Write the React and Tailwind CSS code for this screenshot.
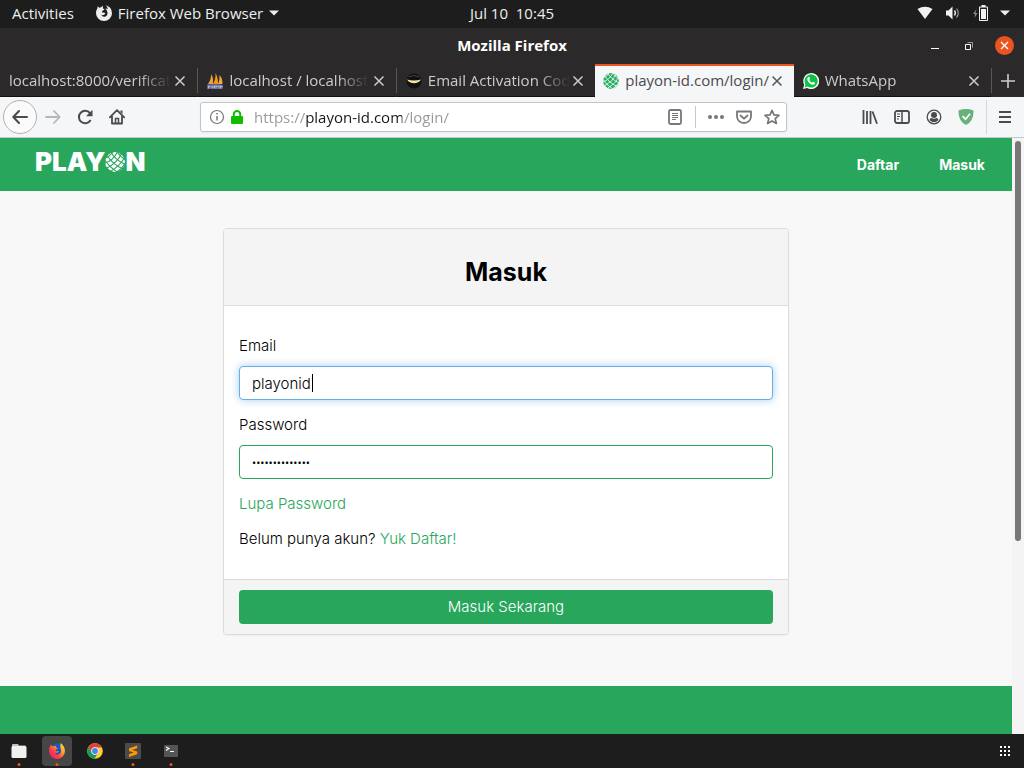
function MeshBall({ size = 16, ball, line }) {
  return (
    <svg width={size} height={size} viewBox="0 0 20 20" fill="none" className="shrink-0" aria-hidden="true">
      <circle cx="10" cy="10" r="9.9" fill={ball} />
      <g stroke={line} strokeWidth="1.100">
        <path d="M0 6Q5 5 8-1M0 11Q8 9 13-1M2 16Q12 11 17 1M6 19Q15 14 20 5M11 20.500Q17 17 20.500 11" />
        <path d="M12-1Q14 4 21 8M6 0Q10 8 20.500 12.500M2 3Q7 12 18 17M-1 7Q4 15 13 20.500M-1 13Q2 17 7 20.500" />
      </g>
    </svg>
  );
}

function SailsIcon() {
  return (
    <svg width="16" height="16" viewBox="0 0 16 16" className="shrink-0" aria-hidden="true">
      <path d="M1 11Q4 7 4.500 1Q6.500 5 6 11Z" fill="#f0a04b" />
      <path d="M6 11Q9 6 8.500 0Q11 4 11 11Z" fill="#f89c0e" />
      <path d="M11 11Q13 7 12.500 2Q15.500 5 15.500 11Z" fill="#f7a83c" />
      <path d="M0 11.500Q8 10 16 12V16H0Z" fill="#5a5f8f" />
      <path d="M1.500 15.500V13H3V14.500M5 15.500V12.500M5 14H7M7.500 12.500V15.500M9 15.500V12.500L10.500 14L12 12.500V15.500M13.500 15.500V13H15V14.500" fill="none" stroke="#d0d0e4" strokeWidth=".8" />
    </svg>
  );
}

function SmileIcon() {
  return (
    <svg width="16" height="16" viewBox="0 0 16 16" className="shrink-0" aria-hidden="true">
      <circle cx="8" cy="8" r="7.500" fill="#111" />
      <path d="M2.500 4Q8 1 13.500 4" stroke="#444" fill="none" />
      <path d="M1 6.500Q8 8.500 15 6.500Q12.500 10.300 8 10.300T1 6.500Z" fill="#f3e7a0" />
    </svg>
  );
}

function WhatsAppIcon() {
  return (
    <svg width="16" height="16" viewBox="0 0 16 16" className="shrink-0" aria-hidden="true">
      <path d="M0 16L1.200 11.800A8 8 0 1 1 4.300 15Z" fill="#fff" />
      <path d="M1.600 14.400L2.500 11.400A6.600 6.600 0 1 1 4.700 13.600Z" fill="#0dc143" />
      <path d="M5.200 4Q6.300 3.300 6.800 5L7 6L6.300 7Q7.300 9 9.300 9.700L10.200 8.800L12 9.700Q12.200 11.800 9.900 11.800Q5.500 11 4.300 6.800Q4 5 5.200 4Z" fill="#fff" />
    </svg>
  );
}

function FirefoxGlyph() {
  return (
    <svg width="16" height="16" viewBox="0 0 16 16" aria-hidden="true">
      <path d="M1.300 3.500L1.800 1.200L3.200 2.700Q4 2.300 5 2.300L7 .8L6.800 3.200L8.600 4.400L7 5.500Q5.500 6 6.300 7.800Q8 7 9.500 8.300Q8.500 9 8.300 9.800Q6.500 10.600 5.200 9.800Q6.200 12.300 9 11.700Q12.200 10.500 11.300 6.800Q10.800 5 9.300 3.500Q11 3.600 11.900 4.600Q11.800 2.200 9.800 .3Q15.800 2 16 8.200A8 7.800 0 0 1 0 8.200Q0 5.500 1.300 3.500Z" fill="currentColor" />
    </svg>
  );
}

function Cross({ className }) {
  return (
    <svg width="12" height="12" viewBox="0 0 12 12" className={className} aria-hidden="true">
      <path d="M1.500 1.500L10.500 10.500M10.500 1.500L1.500 10.500" stroke="currentColor" strokeWidth="1.500" fill="none" />
    </svg>
  );
}

function Triangle() {
  return (
    <svg width="10" height="6" viewBox="0 0 10 6" aria-hidden="true">
      <path d="M0 .5H10L5 5.500Z" fill="currentColor" />
    </svg>
  );
}

const tabs = [
  { title: 'localhost:8000/verificat', icon: null },
  { title: 'localhost / localhost', icon: <SailsIcon /> },
  { title: 'Email Activation Cod', icon: <SmileIcon /> },
  { title: 'playon-id.com/login/', icon: <MeshBall ball="#27ae60" line="#f5f6f7" />, active: true },
  { title: 'WhatsApp', icon: <WhatsAppIcon /> },
];

function SystemBar() {
  return (
    <header className="grid h-7 grid-cols-[1fr_auto_1fr] items-center bg-[#1d1d1d] px-3 pb-0.5 text-[15px] font-medium text-[#eee]">
      <div className="flex items-center gap-[22px]">
        <button type="button">Activities</button>
        <button type="button" className="flex items-center gap-1.5">
          <FirefoxGlyph />
          <span>Firefox Web Browser</span>
          <Triangle />
        </button>
      </div>
      <button type="button" className="whitespace-pre">Jul 10  10:45</button>
      <button type="button" aria-label="System menu" className="flex items-center justify-end gap-3 pr-0.5">
        <svg width="16" height="14" viewBox="0 0 16 14" aria-hidden="true">
          <path d="M.5 3Q8-1.500 15.500 3L8 13Z" fill="#f2f2f2" />
        </svg>
        <svg width="16" height="14" viewBox="0 0 16 14" fill="none" aria-hidden="true">
          <path d="M1 4.500H3.500L7.500.5V13.500L3.500 9.500H1Z" fill="#f2f2f2" />
          <path d="M9.500 4.500Q11.300 7 9.500 9.500" stroke="#f2f2f2" strokeWidth="1.300" />
          <path d="M11.500 2.500Q15 7 11.500 11.500" stroke="#999" strokeWidth="1.200" />
        </svg>
        <svg width="15" height="16" viewBox="0 0 15 16" aria-hidden="true">
          <path d="M3.500 4L0 9H2L1.500 13L4.500 8H2.500Z" fill="#888" />
          <path d="M8.500 0H12.500V1.500H14Q15 1.500 15 2.500V15Q15 16 14 16H7Q6 16 6 15V2.500Q6 1.500 7 1.500H8.500Z" fill="#f2f2f2" />
          <path d="M7 2.500H14V15H7Z" fill="#1d1d1d" />
          <path d="M8 4H13V14H8Z" fill="#f2f2f2" />
        </svg>
        <Triangle />
      </button>
    </header>
  );
}

function TitleBar() {
  return (
    <div className="grid h-9 grid-cols-[1fr_auto_1fr] items-center bg-[#2c292a] px-[10px] pb-px">
      <span />
      <h1 className="text-[15px] font-bold text-white">Mozilla Firefox</h1>
      <div className="flex items-center justify-end gap-4 text-white">
        <button type="button" aria-label="Minimize" className="flex size-4 items-center justify-center">
          <svg width="8" height="8" viewBox="0 0 8 8"><path d="M0 6H8V7H0Z" fill="currentColor" /></svg>
        </button>
        <button type="button" aria-label="Restore" className="flex size-5 items-center justify-center">
          <svg width="8" height="8" viewBox="0 0 8 8" fill="none">
            <path d="M2.500.5H7.500V5.500" stroke="#999" />
            <path d="M.5 2.500H5.500V7.500H.5Z" stroke="currentColor" />
          </svg>
        </button>
        <button type="button" aria-label="Close window" className="flex size-[19px] items-center justify-center rounded-full bg-[#e95420]">
          <svg width="9" height="9" viewBox="0 0 9 9"><path d="M1 1L8 8M8 1L1 8" stroke="currentColor" strokeWidth="1.300" /></svg>
        </button>
      </div>
    </div>
  );
}

function Tab({ title, icon, active }) {
  return (
    <div
      className={
        active
          ? 'flex min-w-0 flex-1 items-center border-t-2 border-[#e95420] bg-[#f5f6f7] pr-[11px] pb-0.5 pl-2 text-[#4a4a4f]'
          : 'flex min-w-0 flex-1 items-center border-t-2 border-b border-t-transparent border-b-[#111] pr-[11px] pb-px pl-[9px] text-[#ccc]'
      }
    >
      <button type="button" role="tab" aria-selected={!!active} className="flex min-w-0 flex-1 items-center gap-1.5 text-left">
        {icon}
        <span
          className={
            active
              ? 'flex-1 whitespace-nowrap'
              : 'flex-1 whitespace-nowrap [mask-image:linear-gradient(to_left,transparent,black_32px)]'
          }
        >
          {title}
        </span>
      </button>
      <button type="button" aria-label={'Close ' + title} className="ml-1 flex shrink-0 items-center">
        <Cross className={active ? 'text-[#555]' : 'text-[#ccc]'} />
      </button>
    </div>
  );
}

function TabStrip() {
  return (
    <div role="tablist" className="flex h-[33px] bg-[#2c292a] text-[15px]">
      {tabs.map((tab, i) => (
        <div key={tab.title} className="flex min-w-0 flex-1">
          <Tab {...tab} />
          {i === 2 || i === 3 ? null : <span className="my-1 w-px self-stretch bg-[#59575a]" />}
        </div>
      ))}
      <button type="button" aria-label="New tab" className="flex w-8 items-center justify-center text-[#ccc]">
        <svg width="14" height="14" viewBox="0 0 14 14"><path d="M7 0V14M0 7H14" stroke="currentColor" strokeWidth="1.600" /></svg>
      </button>
    </div>
  );
}

function IconButton({ label, children, className = 'text-[#4a4a4f]' }) {
  return (
    <button type="button" aria-label={label} className={className}>
      <svg width="16" height="16" viewBox="0 0 16 16" fill="none" stroke="currentColor" strokeWidth="1.800" className="block">
        {children}
      </svg>
    </button>
  );
}

function Toolbar() {
  return (
    <div className="flex h-[41px] items-center border-b border-[#c5c8cc] bg-[#f5f6f7] pr-[13px] pl-[3px]">
      <div className="flex items-center gap-4">
        <button type="button" aria-label="Back" className="-mr-2 flex size-[34px] items-center justify-center rounded-full border border-[#b1b1b3] bg-[#fbfbfb] text-[#4a4a4f]">
          <svg width="16" height="16" viewBox="0 0 16 16" fill="none" stroke="currentColor" strokeWidth="2" strokeLinecap="round" strokeLinejoin="round">
            <path d="M15 8H1.500M7 2L1.300 8L7 14" />
          </svg>
        </button>
        <IconButton label="Forward" className="text-[#b5b6b9]">
          <path d="M1 8H14.500M9 2L14.700 8L9 14" strokeLinecap="round" strokeLinejoin="round" />
        </IconButton>
        <IconButton label="Reload">
          <path d="M13 4.200A6.200 6.200 0 1 0 13.600 11" strokeWidth="2" />
          <path d="M15.500.8V7.300H9Z" fill="currentColor" stroke="none" />
        </IconButton>
        <IconButton label="Home">
          <path d="M.8 8.300L8 1.200L15.200 8.300M3 7V14.500H13V7" strokeLinejoin="round" strokeLinecap="round" />
          <path d="M6.500 14V9.500H9.500V14" strokeWidth="1.500" />
          <path d="M11.500 1.500H13.500V5L11.500 3Z" fill="currentColor" stroke="none" />
        </IconButton>
      </div>
      <span className="flex-[75]" />
      <div className="flex h-[30px] flex-[571] items-center rounded-[3px] border border-[#c0c3c8] bg-white pr-1.5 pl-2 shadow-xs">
        <IconButton label="Site information" className="text-[#77777b]">
          <circle cx="8" cy="8" r="6.500" strokeWidth="1.200" />
          <path d="M8 7V11.500M8 4V5.500" strokeWidth="1.500" />
        </IconButton>
        <button type="button" aria-label="Connection secure" className="ml-1.5">
          <svg width="12" height="14" viewBox="0 0 12 14" className="block">
            <path d="M2.800 7V4.200A3.200 3.200 0 0 1 9.200 4.200V7" stroke="#12bc00" strokeWidth="2" fill="none" />
            <rect y="6" width="12" height="8" rx="1" fill="#12bc00" />
          </svg>
        </button>
        <input
          aria-label="Address"
          defaultValue="https://playon-id.com/login/"
          className="ml-[11px] min-w-0 flex-1 bg-[linear-gradient(to_right,#97979b_51px,#18181a_51px,#18181a_148px,#97979b_148px)] bg-clip-text text-[15px] text-transparent outline-none"
        />
        <IconButton label="Reader view" className="text-[#77777b]">
          <rect x="2" y="1" width="12" height="14" rx="1.500" />
          <path d="M5 4.500H11M5 6.500H11M5 8.500H11M5 10.500H9" strokeWidth="1" />
        </IconButton>
        <span className="mx-3 h-[22px] w-px bg-[#c8c8cc]" />
        <div className="flex gap-3">
          <IconButton label="Page actions" className="text-[#77777b]">
            <g fill="currentColor" stroke="none"><circle cx="2" cy="8" r="2" /><circle cx="8" cy="8" r="2" /><circle cx="14" cy="8" r="2" /></g>
          </IconButton>
          <IconButton label="Save to Pocket" className="text-[#77777b]">
            <path d="M1 2.500H15V7.500A7 6.500 0 0 1 1 7.500Z" strokeLinejoin="round" />
            <path d="M4.500 6.500L8 9.700L11.500 6.500" strokeLinecap="round" strokeLinejoin="round" />
          </IconButton>
          <IconButton label="Bookmark" className="text-[#77777b]">
            <path d="M8 1.300L10 5.900L15 6.300L11.200 9.600L12.400 14.500L8 11.900L3.600 14.500L4.800 9.600L1 6.300L6 5.900Z" strokeWidth="1.700" strokeLinejoin="round" />
          </IconButton>
        </div>
      </div>
      <span className="flex-[75]" />
      <div className="flex items-center gap-4">
        <IconButton label="Library">
          <path d="M1.500 1V15M5 2V15M8.500 2V15M10.500 2.500L15 14.800" />
        </IconButton>
        <IconButton label="Sidebars">
          <rect x="1" y="2" width="14" height="12" rx="2" />
          <path d="M8 2V14" strokeWidth="1.500" />
          <path d="M3 5H6M3 7.500H6M3 10H5" strokeWidth="1" />
        </IconButton>
        <IconButton label="Account">
          <circle cx="8" cy="8" r="6.800" strokeWidth="1.300" />
          <circle cx="8" cy="6" r="3" fill="currentColor" stroke="none" />
          <path d="M3.500 11Q4 9 5.500 9Q8 10.500 10.500 9Q12 9 12.500 11Q8 15.500 3.500 11Z" fill="currentColor" stroke="none" />
        </IconButton>
        <IconButton label="Ad blocker" className="text-white">
          <path d="M.5 1.500Q8-1.300 15.500 1.500Q16 12 8 16Q0 12 .5 1.500Z" fill="#67b279" stroke="none" />
          <path d="M4.500 7.200L7.500 10.200L12 4.800" strokeWidth="1.700" />
        </IconButton>
      </div>
      <span className="mx-3 h-[34px] w-px bg-[#d4d6d9]" />
      <button type="button" aria-label="Open menu" className="text-[#4a4a4f]">
        <svg width="12" height="12" viewBox="0 0 12 12" className="block"><path d="M0 1H12M0 6H12M0 11H12" stroke="currentColor" strokeWidth="2" /></svg>
      </button>
    </div>
  );
}

function SiteNav() {
  return (
    <nav className="flex h-[53px] items-center justify-between bg-[#27a65c] pr-[27px] pl-[35px] text-white">
      <a href="#home" aria-label="PLAYON" className="flex items-center pb-1.5 text-[26px] leading-8 font-black">
        <span>PLAY</span>
        <MeshBall size={20} ball="#fff" line="#27a65c" />
        <span>N</span>
      </a>
      <div className="flex gap-10 text-sm font-bold">
        <a href="#daftar">Daftar</a>
        <a href="#masuk">Masuk</a>
      </div>
    </nav>
  );
}

function LoginCard() {
  return (
    <form
      onSubmit={(e) => e.preventDefault()}
      className="mx-auto mt-[37px] w-full max-w-[566px] overflow-hidden rounded border border-[#dcdcdc] bg-white text-[15px] leading-5 font-light text-black shadow-xs"
    >
      <div className="border-b border-[#dcdcdc] bg-[#f4f4f4] pt-[30px] pb-5">
        <h2 className="text-center text-[25px] leading-[26px] font-bold">Masuk</h2>
      </div>
      <div className="px-[15px] py-[30px]">
        <label htmlFor="email" className="block">Email</label>
        <div className="relative mt-2.5">
          <input
            id="email"
            type="text"
            defaultValue="playonid"
            className="block h-[34px] w-full rounded border border-[#66afe9] bg-white px-3 caret-transparent shadow-[0_0_8px_rgba(102,175,233,0.6)] outline-none"
          />
          <span className="absolute top-2 left-[73px] h-[18px] w-px bg-black" />
        </div>
        <label htmlFor="password" className="mt-[15px] block">Password</label>
        <input
          id="password"
          type="password"
          defaultValue="playonpassword"
          className="mt-2.5 block h-[34px] w-full rounded border border-[#27a65c] bg-white px-3 font-['Open_Sans',sans-serif] text-[11px] font-normal outline-none"
        />
        <p className="mt-[15px]">
          <a href="#lupa" className="text-[#27a65c]">Lupa Password</a>
        </p>
        <p className="mt-[15px]">
          Belum punya akun? <a href="#daftar" className="text-[#27a65c]">Yuk Daftar!</a>
        </p>
      </div>
      <div className="border-t border-[#dcdcdc] bg-[#f4f4f4] px-[15px] py-2.5">
        <button type="submit" className="block h-[34px] w-full rounded bg-[#27a65c] text-white">Masuk Sekarang</button>
      </div>
    </form>
  );
}

function FirefoxLogo() {
  return (
    <svg width="16" height="16" viewBox="0 0 16 16" aria-hidden="true">
      <defs>
        <linearGradient id="fx" x1="1" y1="0" x2="0" y2="1">
          <stop offset="0" stopColor="#fff44f" />
          <stop offset=".35" stopColor="#ffa022" />
          <stop offset=".65" stopColor="#ff3b47" />
          <stop offset="1" stopColor="#e31587" />
        </linearGradient>
      </defs>
      <circle cx="8" cy="7" r="6.500" fill="#1557c9" />
      <path d="M11.500 0Q16 3 15.900 8.500A7.900 7.500 0 0 1 .1 8.500Q0 4 2 1.500L3 3.200Q4.500 2.700 5.500 3.200L7 2.500Q6.500 4 7.200 4.600L8.800 5Q8.500 6 6.800 6.500Q6 8 7.500 8.300Q9 7.500 10 8.500Q8.500 10.500 6 10Q7.500 12.500 10.300 11.200Q13.200 9 11.300 4.500Z" fill="url(#fx)" />
    </svg>
  );
}

function ChromeLogo() {
  return (
    <svg width="16" height="16" viewBox="0 0 16 16" aria-hidden="true">
      <circle cx="8" cy="8" r="7.800" fill="#ffcd40" />
      <path d="M1.200 4.200A7.800 7.800 0 0 1 14.800 4.500H8A3.700 3.700 0 0 0 4.700 9.700Z" fill="#db4437" />
      <path d="M1.200 4.200L4.800 9.900A3.700 3.700 0 0 0 10.500 10.700L7.500 15.800A7.800 7.800 0 0 1 1.200 4.200Z" fill="#0f9d58" />
      <circle cx="8" cy="8" r="3.700" fill="#f1f1f1" />
      <circle cx="8" cy="8" r="2.900" fill="#4285f4" />
    </svg>
  );
}

const apps = [
  {
    name: 'Files',
    running: true,
    icon: (
      <svg width="16" height="16" viewBox="0 0 16 16" aria-hidden="true">
        <path d="M1 2Q1 1 2 1H7L8 2.500H14.500V8H1Z" fill="#c8bfb2" />
        <rect x=".5" y="3" width="15" height="12" rx="1.500" fill="#f3f1ee" />
      </svg>
    ),
  },
  { name: 'Firefox', running: true, active: true, icon: <FirefoxLogo /> },
  { name: 'Chrome', icon: <ChromeLogo /> },
  {
    name: 'Sublime Text',
    running: true,
    icon: (
      <svg width="16" height="16" viewBox="0 0 16 16" aria-hidden="true">
        <rect width="16" height="16" rx="1" fill="#4b4b4b" />
        <path d="M12.200 2.500V5.300L7.300 6.900L12.200 8.600V11.300L4 14V11.200L8.700 9.600L4 8V5.200Z" fill="#ff9800" />
      </svg>
    ),
  },
  {
    name: 'Terminal',
    running: true,
    icon: (
      <svg width="16" height="16" viewBox="0 0 16 16" aria-hidden="true">
        <rect x="1" y="2" width="14" height="12" rx="1" fill="#555" />
        <path d="M3 4L6 5.500L3 7.500M7 8.500H11" stroke="#fff" strokeWidth="1.100" fill="none" />
      </svg>
    ),
  },
];

function Dock() {
  return (
    <footer className="flex h-[34px] items-center justify-between bg-[#1d1d1d] pr-3.5 pl-1">
      <div className="flex gap-2">
        {apps.map((app) => (
          <button
            key={app.name}
            type="button"
            aria-label={app.name}
            className={
              app.active
                ? 'relative flex size-[30px] items-center justify-center rounded bg-[#464646]'
                : 'relative flex size-[30px] items-center justify-center rounded'
            }
          >
            {app.icon}
            {app.running && <span className="absolute bottom-0 left-1/2 size-[3px] -translate-x-1/2 rounded-full bg-[#e95420]" />}
          </button>
        ))}
      </div>
      <button type="button" aria-label="Show applications" className="grid grid-cols-3 gap-0.5">
        {Array.from({ length: 9 }, (_, i) => (
          <span key={i} className="size-0.5 bg-white" />
        ))}
      </button>
    </footer>
  );
}

export default function App() {
  return (
    <div className="flex min-h-screen flex-col font-['Open_Sans',sans-serif]">
      <SystemBar />
      <TitleBar />
      <TabStrip />
      <Toolbar />
      <div className="flex flex-1 bg-[#f8f8f8]">
        <main className="flex min-w-0 flex-1 flex-col font-['Inter',sans-serif]">
          <SiteNav />
          <LoginCard />
          <div className="mt-[51px] min-h-12 flex-1 bg-[#27a65c]" />
        </main>
        <div className="w-3 bg-[#f4f4f4] px-[3px] pt-[3px]">
          <div className="h-[400px] rounded-full bg-[#777]" />
        </div>
      </div>
      <Dock />
    </div>
  );
}
